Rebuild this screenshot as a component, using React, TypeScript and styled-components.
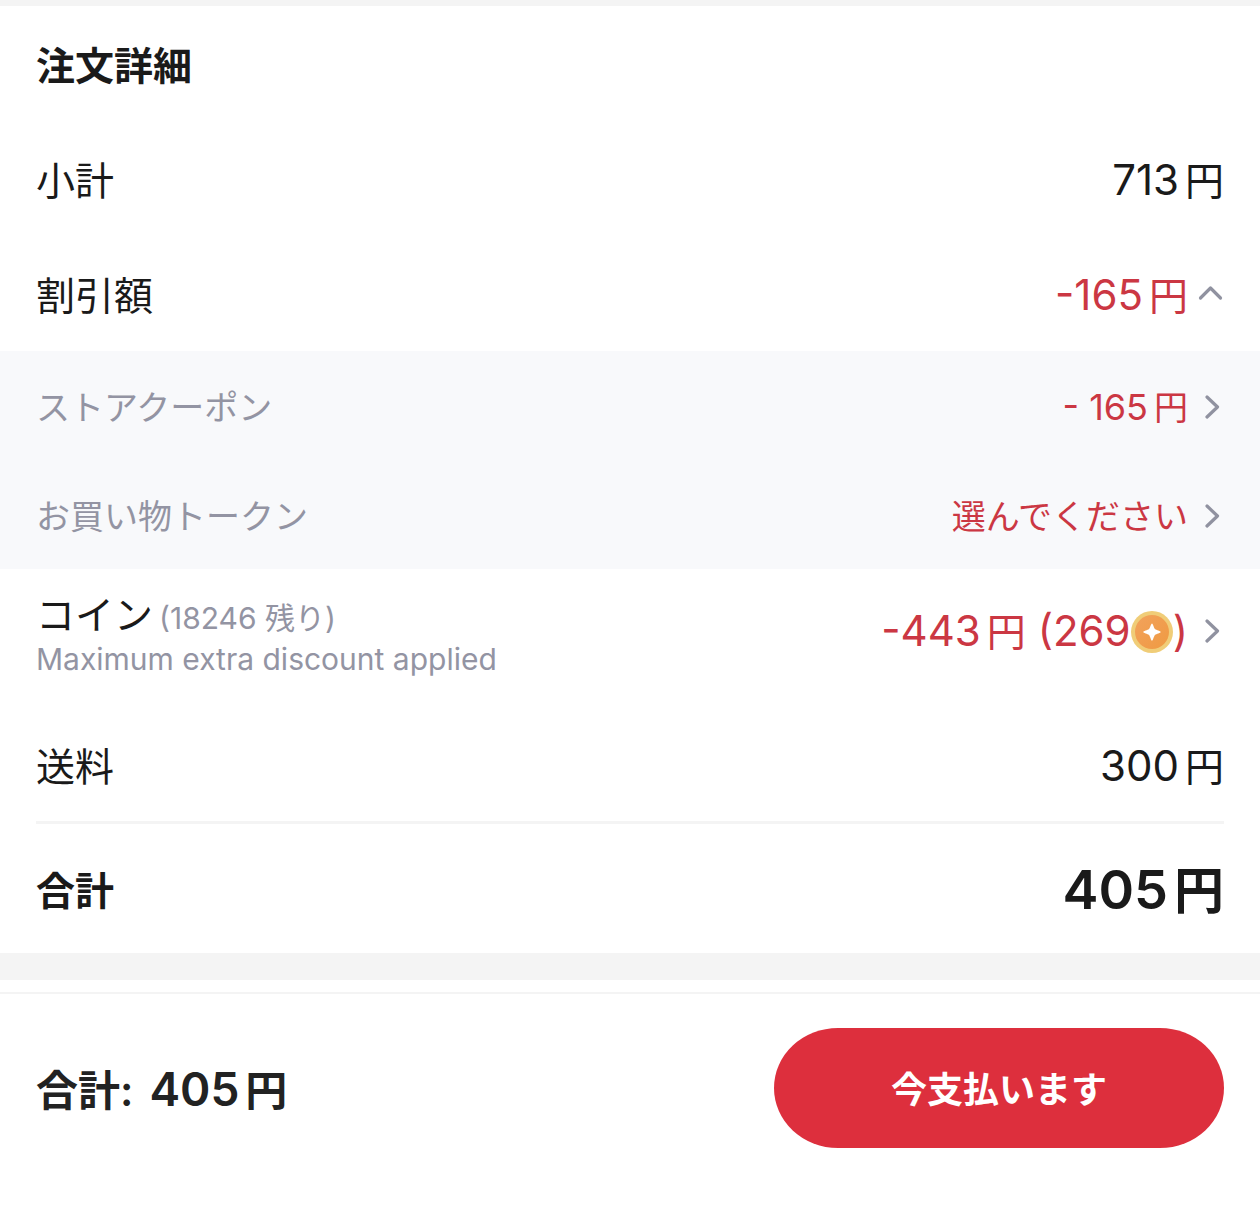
import React, { useState } from "react";
import styled, { createGlobalStyle } from "styled-components";

const color = {
  ink: "#1a1a1a",
  red: "#cb3743",
  action: "#dd2f3d",
  muted: "#9394a3",
  chevron: "#9092a0",
  panel: "#f8f9fb",
  band: "#f4f4f4",
};

const GlobalStyle = createGlobalStyle`
  *, *::before, *::after { box-sizing: border-box; }
  body {
    margin: 0;
    background: #fff;
    color: ${color.ink};
    font-family: Inter, "Noto Sans CJK JP", sans-serif;
  }
  button {
    margin: 0;
    border: 0;
    font: inherit;
    color: inherit;
    cursor: pointer;
  }
`;

const Page = styled.main`
  display: flex;
  flex-direction: column;
`;

const Band = styled.div<{ $height: number }>`
  height: ${(p) => p.$height}px;
  background: ${color.band};
`;

const Summary = styled.section`
  display: flex;
  flex-direction: column;
`;

const Row = styled.div<{ $height?: number }>`
  display: flex;
  align-items: center;
  justify-content: space-between;
  width: 100%;
  min-height: ${(p) => p.$height ?? 115}px;
  padding: 4px 36px 0;
  background: none;
  text-align: left;
`;

const CoinRow = styled(Row)`
  padding: 0 36px 14px;
`;

const Panel = styled.div`
  background: ${color.panel};
`;

const Title = styled.h2`
  margin: 0;
  font-size: 39px;
  line-height: 48px;
  font-weight: 700;
`;

const Label = styled.span<{ $strong?: boolean }>`
  font-size: 39px;
  line-height: 48px;
  font-weight: ${(p) => (p.$strong ? 700 : 400)};
`;

const SubLabel = styled.span`
  font-size: 34px;
  line-height: 48px;
  color: ${color.muted};
`;

const Value = styled.span<{ $size?: number; $red?: boolean; $strong?: boolean }>`
  display: flex;
  align-items: baseline;
  font-size: ${(p) => p.$size ?? 42}px;
  line-height: 56px;
  font-weight: ${(p) => (p.$strong ? 600 : 400)};
  color: ${(p) => (p.$red ? color.red : color.ink)};
  white-space: pre;
`;

const Unit = styled.span<{ $size?: number }>`
  margin-left: 6px;
  font-size: ${(p) => p.$size ?? 39}px;
`;

const Trailing = styled.span<{ $gap: number }>`
  display: flex;
  align-items: center;
  gap: ${(p) => p.$gap}px;
`;

const CoinText = styled.span`
  display: flex;
  flex-direction: column;
  padding-top: 6px;
`;

const CoinHead = styled.span`
  display: flex;
  align-items: baseline;
  gap: 6px;
`;

const Note = styled.span`
  font-size: 30px;
  line-height: 40px;
  color: ${color.muted};
`;

const Divider = styled.hr`
  width: calc(100% - 72px);
  height: 3px;
  margin: 0 36px;
  border: 0;
  background: ${color.band};
`;

const Footer = styled.footer`
  display: flex;
  align-items: center;
  justify-content: space-between;
  margin-top: 12px;
  padding: 34px 36px 63px;
  border-top: 2px solid ${color.band};
`;

const FooterTotal = styled.span`
  display: flex;
  align-items: baseline;
  gap: 16px;
  padding-top: 4px;
  line-height: 56px;
  font-weight: 600;
  color: #222;
`;

const FooterLabel = styled.span`
  font-size: 42px;
`;

const FooterAmount = styled.span`
  font-size: 46px;
`;

const PayButton = styled.button`
  width: 450px;
  height: 120px;
  padding: 4px 0 0;
  border-radius: 64px / 60px;
  background: ${color.action};
  && {
    color: #fff;
    font-size: 36px;
    line-height: 48px;
    font-weight: 600;
  }
`;

const ChevronRight = () => (
  <svg width="24" height="26" viewBox="0 0 24 26" fill="none" aria-hidden="true">
    <path d="M7 2L17.5 12L7 22" stroke={color.chevron} strokeWidth="3.2" strokeLinecap="round" strokeLinejoin="round" />
  </svg>
);

const ChevronToggle = ({ open }: { open: boolean }) => (
  <svg width="26" height="26" viewBox="0 0 26 26" fill="none" aria-hidden="true">
    <path
      d={open ? "M2.5 15L12.5 5L22.5 15" : "M2.5 7L12.5 17L22.5 7"}
      stroke={color.chevron}
      strokeWidth="3.2"
      strokeLinecap="round"
      strokeLinejoin="round"
    />
  </svg>
);

const CoinIcon = styled.svg`
  align-self: center;
`;

const Coin = () => (
  <CoinIcon width="42" height="42" viewBox="0 0 42 42" aria-hidden="true">
    <defs>
      <linearGradient id="coin-face" x1="0" y1="0" x2="1" y2="1">
        <stop offset="0" stopColor="#f2a25c" />
        <stop offset="1" stopColor="#ef9a42" />
      </linearGradient>
    </defs>
    <circle cx="21" cy="21" r="21" fill="#f0cd78" />
    <circle cx="21" cy="21" r="17" fill="url(#coin-face)" />
    <path
      d="M21 12.5C22 12.5 22.8 16.8 24 18C25.2 19.2 29.8 20 29.8 21C29.8 22 25.2 22.8 24 24C22.8 25.2 22 29.8 21 29.8C20 29.8 19.2 25.2 18 24C16.8 22.8 12.2 22 12.2 21C12.2 20 16.8 19.2 18 18C19.2 16.8 20 12.5 21 12.5Z"
      fill="#fff"
    />
  </CoinIcon>
);

export default function App() {
  const [open, setOpen] = useState(true);

  return (
    <>
      <GlobalStyle />
      <Page lang="ja">
        <Band $height={6} />
        <Summary>
          <Row>
            <Title>注文詳細</Title>
          </Row>
          <Row>
            <Label>小計</Label>
            <Value>713<Unit>円</Unit></Value>
          </Row>
          <Row as="button" type="button" aria-expanded={open} onClick={() => setOpen(!open)}>
            <Label>割引額</Label>
            <Trailing $gap={10}>
              <Value $red>-165<Unit>円</Unit></Value>
              <ChevronToggle open={open} />
            </Trailing>
          </Row>
          {open && (
            <Panel>
              <Row as="button" type="button" $height={109}>
                <SubLabel>ストアクーポン</SubLabel>
                <Trailing $gap={12}>
                  <Value $red $size={36}>- 165<Unit $size={34}>円</Unit></Value>
                  <ChevronRight />
                </Trailing>
              </Row>
              <Row as="button" type="button" $height={109}>
                <SubLabel>お買い物トークン</SubLabel>
                <Trailing $gap={12}>
                  <Value $red $size={34}>選んでください</Value>
                  <ChevronRight />
                </Trailing>
              </Row>
            </Panel>
          )}
          <CoinRow as="button" type="button" $height={139}>
            <CoinText>
              <CoinHead>
                <Label>コイン</Label>
                <Note>(18246 残り)</Note>
              </CoinHead>
              <Note>Maximum extra discount applied</Note>
            </CoinText>
            <Trailing $gap={12}>
              <Value $red>
                -443<Unit>円</Unit>
                <span> (269</span>
                <Coin />
                <span>)</span>
              </Value>
              <ChevronRight />
            </Trailing>
          </CoinRow>
          <Row $height={113}>
            <Label>送料</Label>
            <Value>300<Unit>円</Unit></Value>
          </Row>
          <Divider />
          <Row $height={129}>
            <Label $strong>合計</Label>
            <Value $size={54} $strong>405<Unit $size={50}>円</Unit></Value>
          </Row>
        </Summary>
        <Band $height={27} />
        <Footer>
          <FooterTotal>
            <FooterLabel>合計:</FooterLabel>
            <FooterAmount>405<Unit $size={42}>円</Unit></FooterAmount>
          </FooterTotal>
          <PayButton type="button">今支払います</PayButton>
        </Footer>
      </Page>
    </>
  );
}
